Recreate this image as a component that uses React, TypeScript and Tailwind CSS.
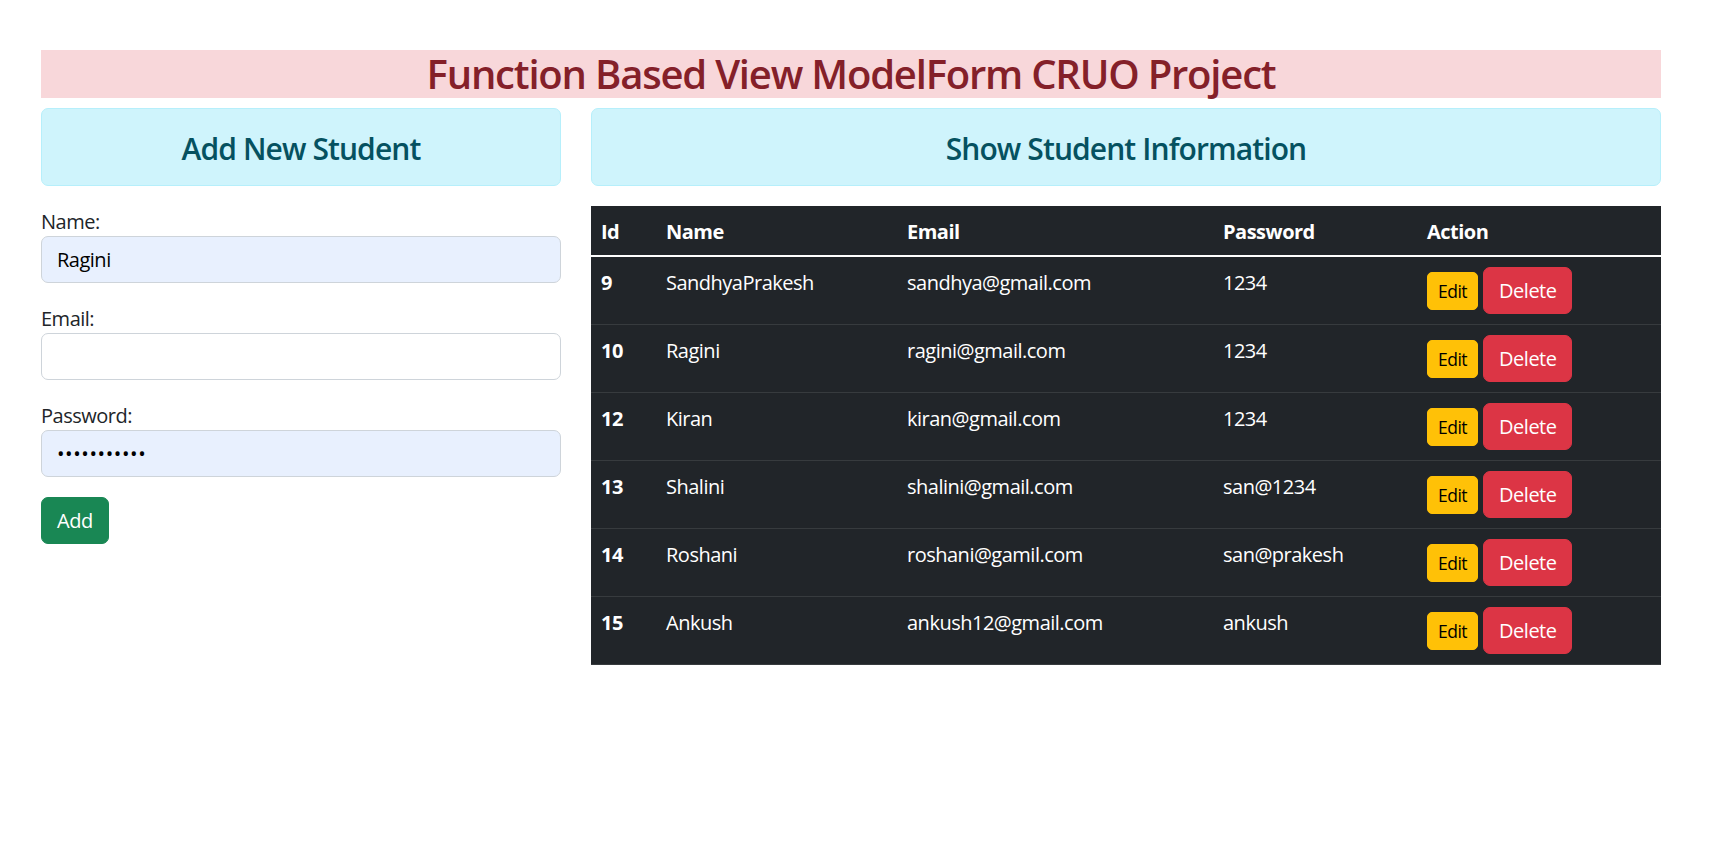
import React from "react";

const rows = [
  { id: 9, name: "SandhyaPrakesh", email: "sandhya@gmail.com", password: "1234" },
  { id: 10, name: "Ragini", email: "ragini@gmail.com", password: "1234" },
  { id: 12, name: "Kiran", email: "kiran@gmail.com", password: "1234" },
  { id: 13, name: "Shalini", email: "shalini@gmail.com", password: "san@1234" },
  { id: 14, name: "Roshani", email: "roshani@gamil.com", password: "san@prakesh" },
  { id: 15, name: "Ankush", email: "ankush12@gmail.com", password: "ankush" },
];

export default function App() {
  return (
    <div
      className="min-h-screen bg-white pl-[41px] pt-[50px] text-[#212529] tracking-[-0.5px]"
      style={{ fontFamily: '"Open Sans", "Noto Sans", "Liberation Sans", sans-serif' }}
    >
      <div className="w-[1620px]">
        <h2 className="bg-[#f8d7da] text-[#842029] text-[40px] leading-[48px] text-center font-semibold tracking-[-1.2px] mb-[10px]">
          Function Based View ModelForm CRUO Project
        </h2>
        <div className="flex gap-[30px]">
          <div className="w-[520px] shrink-0">
            <div className="bg-[#cff4fc] border border-[#b6effb] rounded-[7px] pt-[22px] pb-[18px] px-[20px] mb-[20px]">
              <h4 className="text-[#055160] text-[30px] leading-[36px] font-semibold tracking-[-0.9px] text-center">
                Add New Student
              </h4>
            </div>
            <form onSubmit={(e) => e.preventDefault()}>
              <div className="mb-[20px]">
                <label className="block text-[20px] pt-[2px] leading-[28px]">Name:</label>
                <input
                  type="text"
                  defaultValue="Ragini"
                  className="block w-full h-[47px] px-[15px] text-[20px] tracking-[-0.5px] text-black bg-[#e8f0fe] border border-[#ced4da] rounded-[7px] outline-none"
                />
              </div>
              <div className="mb-[20px]">
                <label className="block text-[20px] pt-[2px] leading-[28px]">Email:</label>
                <input
                  type="email"
                  className="block w-full h-[47px] px-[15px] text-[20px] text-black bg-white border border-[#ced4da] rounded-[7px] outline-none"
                />
              </div>
              <div className="mb-[20px]">
                <label className="block text-[20px] pt-[2px] leading-[28px]">Password:</label>
                <input
                  type="password"
                  defaultValue="san@prakesh"
                  className="block w-full h-[47px] px-[15px] text-[20px] tracking-[0.6px] text-black bg-[#e8f0fe] border border-[#ced4da] rounded-[7px] outline-none"
                />
              </div>
              <button
                type="submit"
                className="h-[47px] px-[15px] text-[20px] leading-[30px] text-white bg-[#198754] border border-[#198754] rounded-[7px]"
              >
                Add
              </button>
            </form>
          </div>
          <div className="w-[1070px] shrink-0">
            <div className="bg-[#cff4fc] border border-[#b6effb] rounded-[7px] pt-[22px] pb-[18px] px-[20px] mb-[20px]">
              <h4 className="text-[#055160] text-[30px] leading-[36px] font-semibold tracking-[-0.9px] text-center">
                Show Student Information
              </h4>
            </div>
            <table className="w-full table-fixed bg-[#212529] text-white text-[20px] leading-[30px] text-left">
              <colgroup>
                <col className="w-[65px]" />
                <col className="w-[241px]" />
                <col className="w-[316px]" />
                <col className="w-[204px]" />
                <col className="w-[244px]" />
              </colgroup>
              <thead>
                <tr className="border-b-2 border-white">
                  <th className="px-[10px] pt-[11px] pb-[8px] font-bold">Id</th>
                  <th className="px-[10px] pt-[11px] pb-[8px] font-bold">Name</th>
                  <th className="px-[10px] pt-[11px] pb-[8px] font-bold">Email</th>
                  <th className="px-[10px] pt-[11px] pb-[8px] font-bold">Password</th>
                  <th className="px-[10px] pt-[11px] pb-[8px] font-bold">Action</th>
                </tr>
              </thead>
              <tbody>
                {rows.map((r) => (
                  <tr key={r.id} className="border-b border-[#373b3e]">
                    <th className="px-[10px] pt-[11px] pb-[9px] align-top font-bold">{r.id}</th>
                    <td className="px-[10px] pt-[11px] pb-[9px] align-top">{r.name}</td>
                    <td className="px-[10px] pt-[11px] pb-[9px] align-top">{r.email}</td>
                    <td className="px-[10px] pt-[11px] pb-[9px] align-top">{r.password}</td>
                    <td className="p-[10px] align-top">
                      <div className="flex items-center gap-[5px]">
                        <button className="h-[38px] px-[10px] text-[17.5px] leading-[26px] text-black bg-[#ffc107] border border-[#ffc107] rounded-[5px]">
                          Edit
                        </button>
                        <button className="h-[47px] px-[15px] text-[20px] leading-[30px] text-white bg-[#dc3545] border border-[#dc3545] rounded-[7px]">
                          Delete
                        </button>
                      </div>
                    </td>
                  </tr>
                ))}
              </tbody>
            </table>
          </div>
        </div>
      </div>
    </div>
  );
}
